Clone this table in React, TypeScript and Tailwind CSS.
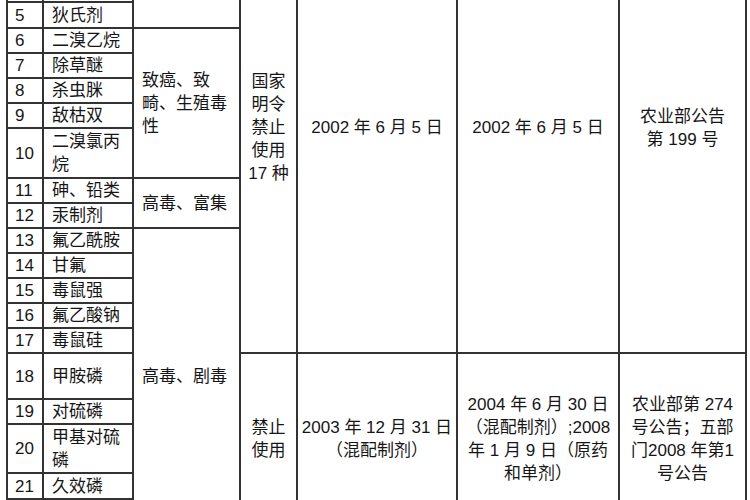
import { ReactNode } from 'react'

type Row = { no: number; name: string; h: number }

const rows: Row[] = [
    { no: 1, name: '六六六', h: 25 },
    { no: 2, name: '滴滴涕', h: 25 },
    { no: 3, name: '毒杀芬', h: 25 },
    { no: 4, name: '艾氏剂', h: 25 },
    { no: 5, name: '狄氏剂', h: 26 },
    { no: 6, name: '二溴乙烷', h: 24 },
    { no: 7, name: '除草醚', h: 25 },
    { no: 8, name: '杀虫脒', h: 25 },
    { no: 9, name: '敌枯双', h: 25 },
    { no: 10, name: '二溴氯丙烷', h: 50 },
    { no: 11, name: '砷、铅类', h: 25 },
    { no: 12, name: '汞制剂', h: 25 },
    { no: 13, name: '氟乙酰胺', h: 25 },
    { no: 14, name: '甘氟', h: 25 },
    { no: 15, name: '毒鼠强', h: 25 },
    { no: 16, name: '氟乙酸钠', h: 25 },
    { no: 17, name: '毒鼠硅', h: 25 },
    { no: 18, name: '甲胺磷', h: 46 },
    { no: 19, name: '对硫磷', h: 25 },
    { no: 20, name: '甲基对硫磷', h: 49 },
    { no: 21, name: '久效磷', h: 26 },
    { no: 22, name: '磷胺', h: 24 },
]

// reason cells keyed by the row they start on
const reasons: Record<number, { span: number; text: string }> = {
    1: { span: 5, text: '高残毒' },
    6: { span: 5, text: '致癌、致畸、生殖毒性' },
    11: { span: 2, text: '高毒、富集' },
    13: { span: 10, text: '高毒、剧毒' },
}

const cell = 'border-2 border-[#333] align-middle'

function Lines({ children }: { children: ReactNode[] }) {
    return <>{children.map((c, i) => <div key={i} className="whitespace-nowrap">{c}</div>)}</>
}

export default function App() {
    return <div className="w-[750px] h-[500px] overflow-hidden bg-white pl-[6px]"
        style={{ fontFamily: '"Liberation Sans", "Noto Sans CJK SC", sans-serif' }}>
        <table className="-mt-[99px] table-fixed border-collapse text-[17px] leading-[23px] text-[#161616] w-[739px]">
            <colgroup>
                <col className="w-[36px]" />
                <col className="w-[90px]" />
                <col className="w-[107px]" />
                <col className="w-[57px]" />
                <col className="w-[160px]" />
                <col className="w-[162px]" />
                <col className="w-[127px]" />
            </colgroup>
            <tbody>
                {rows.map(r => <tr key={r.no}>
                    <td className={cn(cell, 'pl-[7px]')} style={{ height: r.h }}>{r.no}</td>
                    <td className={cn(cell, 'px-[8px]')}>{r.name}</td>
                    {reasons[r.no] && <td rowSpan={reasons[r.no].span} className={cn(cell, 'px-[8px]')}>
                        {reasons[r.no].text}
                    </td>}
                    {r.no === 1 && <>
                        <td rowSpan={17} className={cn(cell, 'text-center')}>
                            <Lines>{['国家', '明令', '禁止', '使用', '17 种']}</Lines>
                        </td>
                        <td rowSpan={17} className={cn(cell, 'text-center')}>2002 年 6 月 5 日</td>
                        <td rowSpan={17} className={cn(cell, 'text-center')}>2002 年 6 月 5 日</td>
                        <td rowSpan={17} className={cn(cell, 'text-center')}>
                            <Lines>{['农业部公告', '第 199 号']}</Lines>
                        </td>
                    </>}
                    {r.no === 18 && <>
                        <td rowSpan={5} className={cn(cell, 'text-center')}>
                            <Lines>{['禁止', '使用']}</Lines>
                        </td>
                        <td rowSpan={5} className={cn(cell, 'text-center')}>
                            <Lines>{['2003 年 12 月 31 日', '（混配制剂）']}</Lines>
                        </td>
                        <td rowSpan={5} className={cn(cell, 'text-center')}>
                            <Lines>{['2004 年 6 月 30 日', '（混配制剂）;2008', '年 1 月 9 日（原药', '和单剂）']}</Lines>
                        </td>
                        <td rowSpan={5} className={cn(cell, 'text-center')}>
                            <Lines>{['农业部第 274', '号公告；五部', '门2008 年第1', '号公告']}</Lines>
                        </td>
                    </>}
                </tr>)}
            </tbody>
        </table>
    </div>
}

function cn(...c: string[]) {
    return c.join(' ')
}
